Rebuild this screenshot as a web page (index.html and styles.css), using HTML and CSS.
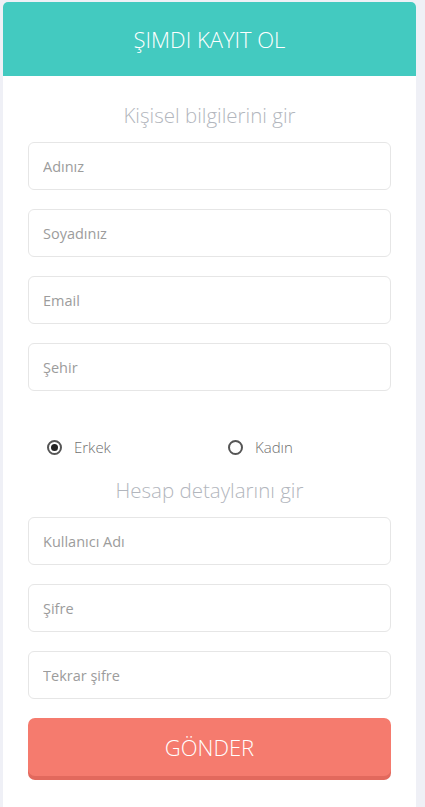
FILE: index.html
```html
<!DOCTYPE html>
<html lang="tr">
<head>
<meta charset="utf-8">
<link rel="stylesheet" href="styles.css">
</head>
<body>
<div class="card">
  <div class="header">ŞIMDI KAYIT OL</div>
  <form class="form">
    <h2 class="subtitle">Kişisel bilgilerini gir</h2>
    <div class="fields">
      <input class="field" type="text" placeholder="Adınız">
      <input class="field" type="text" placeholder="Soyadınız">
      <input class="field" type="text" placeholder="Email">
      <input class="field" type="text" placeholder="Şehir">
    </div>
    <div class="radios">
      <label class="radio"><span class="dot checked"></span><span>Erkek</span></label>
      <label class="radio"><span class="dot"></span><span>Kadın</span></label>
    </div>
    <h2 class="subtitle">Hesap detaylarını gir</h2>
    <div class="fields">
      <input class="field" type="text" placeholder="Kullanıcı Adı">
      <input class="field" type="password" placeholder="Şifre">
      <input class="field" type="password" placeholder="Tekrar şifre">
      <button class="submit" type="button">GÖNDER</button>
    </div>
  </form>
</div>
</body>
</html>
```

FILE: styles.css
```css
* { box-sizing: border-box; }
html, body { margin: 0; padding: 0; }
body {
  background: #eff0f6;
  font-family: "Open Sans", "Noto Sans", sans-serif;
  padding: 2px 9px 0 3px;
  height: 807px;
  overflow: hidden;
}
.card {
  background: #ffffff;
  border-radius: 5px 5px 0 0;
  height: 805px;
  overflow: hidden;
}
.header {
  background: #43cac0;
  height: 74px;
  color: #ffffff;
  font-size: 22px;
  font-weight: 300;
  display: flex;
  align-items: center;
  justify-content: center;
}
.form {
  padding: 26px 25px 0 25px;
  margin: 0;
}
.subtitle {
  margin: 0 0 14px 0;
  font-size: 20.5px;
  line-height: 26px;
  font-weight: 300;
  color: #b2b6bd;
  text-align: center;
}
.fields {
  display: flex;
  flex-direction: column;
  gap: 19px;
}
.field {
  height: 48px;
  width: 100%;
  border: 1px solid #e6e6e6;
  border-radius: 6px;
  padding: 0 14px;
  font-family: "Open Sans", "Noto Sans", sans-serif;
  font-size: 14.5px;
  color: #555;
  background: #fff;
  outline: none;
}
.field::placeholder { color: #9c9c9c; }
.radios {
  display: grid;
  grid-template-columns: 181px 1fr;
  margin: 44px 0 18px 0;
  height: 24px;
  padding-left: 19px;
}
.radio {
  display: flex;
  align-items: center;
  gap: 12px;
  font-size: 15px;
  font-weight: 300;
  color: #6f6f6f;
}
.dot {
  width: 15px;
  height: 15px;
  border: 2px solid #555;
  border-radius: 50%;
  display: inline-flex;
  align-items: center;
  justify-content: center;
}
.dot.checked::after {
  content: "";
  width: 7px;
  height: 7px;
  border-radius: 50%;
  background: #222;
}
.submit {
  height: 58px;
  width: 100%;
  border: none;
  border-radius: 7px;
  background: #f57b6e;
  box-shadow: 0 4px 0 #e2695d;
  color: #ffffff;
  font-family: "Open Sans", "Noto Sans", sans-serif;
  font-size: 22px;
  font-weight: 300;
  cursor: pointer;
}
```
